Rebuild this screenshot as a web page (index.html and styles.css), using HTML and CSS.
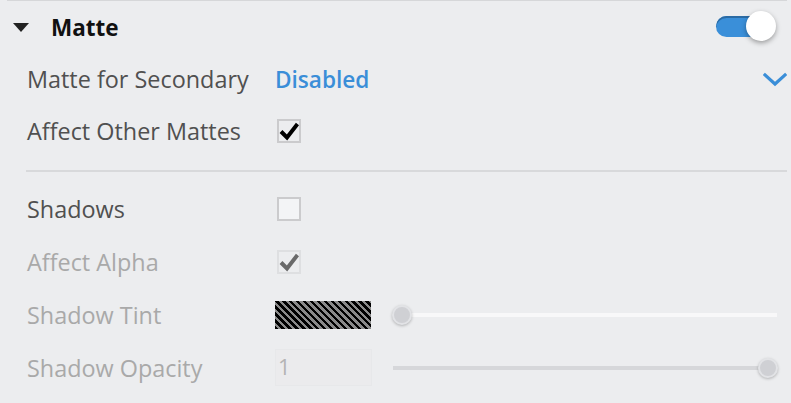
FILE: index.html
```html
<!DOCTYPE html>
<html>
<head>
<meta charset="utf-8">
<link rel="stylesheet" href="styles.css">
</head>
<body>
<div class="panel">
  <div class="header">
    <svg class="caret" width="16" height="10" viewBox="0 0 16 10"><polygon points="0,0 16,0 8,9" fill="#222"/></svg>
    <span class="title">Matte</span>
    <div class="toggle"><div class="track"></div><div class="knob"></div></div>
  </div>
  <div class="row row-top">
    <span class="label">Matte for Secondary</span>
    <div class="value select">
      <span class="select-text">Disabled</span>
      <svg class="chevron" width="24" height="15" viewBox="0 0 24 15"><polyline points="2,3 12,12 22,3" fill="none" stroke="#3a8ed8" stroke-width="3.2" stroke-linecap="square"/></svg>
    </div>
  </div>
  <div class="row row-top">
    <span class="label">Affect Other Mattes</span>
    <div class="value">
      <span class="checkbox checked">
        <svg width="20" height="20" viewBox="0 0 20 20"><polyline points="2,10.5 8,16.5 18.5,3" fill="none" stroke="#000" stroke-width="4"/></svg>
      </span>
    </div>
  </div>
  <div class="separator"></div>
  <div class="row">
    <span class="label">Shadows</span>
    <div class="value"><span class="checkbox empty"></span></div>
  </div>
  <div class="row disabled">
    <span class="label">Affect Alpha</span>
    <div class="value">
      <span class="checkbox dis">
        <svg width="20" height="20" viewBox="0 0 20 20"><polyline points="2,10.5 8,16.5 18.5,3" fill="none" stroke="#6a6a6a" stroke-width="4"/></svg>
      </span>
    </div>
  </div>
  <div class="row disabled">
    <span class="label">Shadow Tint</span>
    <div class="value">
      <span class="swatch"></span>
      <div class="slider">
        <div class="slider-track light"></div>
        <div class="thumb thumb-left"></div>
      </div>
    </div>
  </div>
  <div class="row disabled">
    <span class="label">Shadow Opacity</span>
    <div class="value">
      <span class="numbox">1</span>
      <div class="slider">
        <div class="slider-track dark"></div>
        <div class="thumb thumb-right"></div>
      </div>
    </div>
  </div>
</div>
</body>
</html>
```
FILE: styles.css
```css
html, body {
  margin: 0;
  padding: 0;
  background: #ecedef;
}
body {
  font-family: "Open Sans", "Noto Sans", sans-serif;
  width: 791px;
  height: 403px;
  overflow: hidden;
}
.panel {
  margin-left: 7px;
  width: 780px;
  border-top: 1px solid #d6d7d9;
}
.header {
  height: 52px;
  display: flex;
  align-items: center;
}
.caret {
  margin-left: 6px;
  margin-top: 2px;
}
.title {
  margin-left: 22px;
  font-weight: 700;
  font-size: 22.5px;
  color: #111;
}
.toggle {
  margin-left: auto;
  margin-right: 11px;
  width: 60px;
  height: 30px;
  position: relative;
}
.track {
  position: absolute;
  left: 0;
  top: 4px;
  width: 48px;
  height: 21px;
  border-radius: 11px;
  background: #3a8fd9;
  box-shadow: inset 0 2px 0 #2b6ba4;
}
.knob {
  position: absolute;
  right: 0;
  top: -1px;
  width: 30px;
  height: 30px;
  border-radius: 50%;
  background: #fff;
  box-shadow: 0 2px 5px rgba(0,0,0,0.35);
}
.row {
  display: flex;
  align-items: center;
  height: 52px;
  padding-left: 20px;
}
.row.disabled {
  height: 53px;
}
.label {
  width: 248px;
  font-size: 23.4px;
  font-weight: 500;
  color: #505050;
  white-space: nowrap;
}
.disabled .label {
  color: #a9a9a9;
}
.value {
  flex: 1;
  display: flex;
  align-items: center;
}
.select {
  justify-content: space-between;
}
.select-text {
  color: #3a8ed8;
  font-size: 22.6px;
  font-weight: 600;
}
.checkbox {
  width: 20px;
  height: 20px;
  border: 2px solid #cbcbcd;
  display: flex;
  align-items: center;
  justify-content: center;
  margin-left: 2px;
}
.checkbox.empty {
  background: #f3f4f6;
}
.checkbox.dis {
  border-color: #dedfe1;
}
.separator {
  margin: 13px 0 11px 19px;
  height: 2px;
  background: #d8d9db;
}
.swatch {
  width: 96px;
  height: 28px;
  background: repeating-linear-gradient(45deg, #000 0, #000 2.4px, #8a8a8a 2.4px, #8a8a8a 4.9px);
}
.slider {
  margin-left: 21px;
  width: 385px;
  height: 22px;
  position: relative;
}
.slider-track {
  position: absolute;
  left: 0;
  right: 0;
  top: 9px;
  height: 4px;
}
.slider-track.light {
  left: 10px;
  background: #f8f8f9;
}
.slider-track.dark {
  right: 10px;
  background: #d6d7da;
}
.thumb {
  position: absolute;
  top: 1px;
  width: 16px;
  height: 16px;
  border-radius: 50%;
  background: #cfd0d4;
  border: 2px solid #e2e3e6;
  box-shadow: 0 1px 3px rgba(0,0,0,0.25);
}
.thumb-left { left: 0; }
.thumb-right { right: 0; }
.numbox {
  width: 93px;
  height: 35px;
  padding-left: 2px;
  border: 1px solid #e7e8ea;
  background: #ebebed;
  color: #b4b4b4;
  font-size: 22px;
  line-height: 33px;
}
```
